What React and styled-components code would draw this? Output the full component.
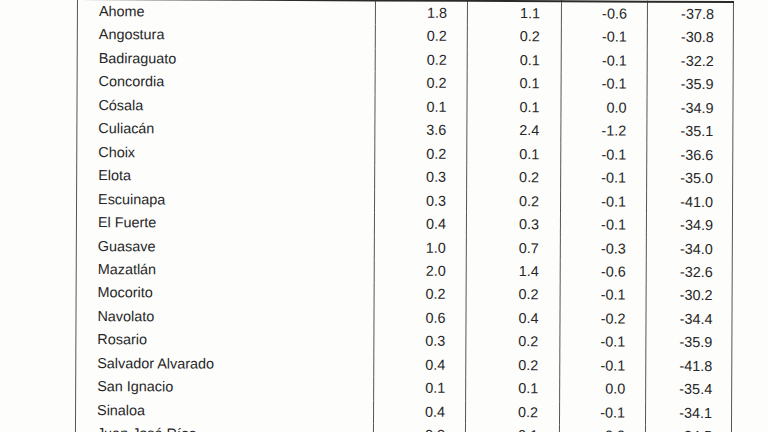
import React from 'react';
import styled, { createGlobalStyle } from 'styled-components';

const GlobalStyle = createGlobalStyle`
  html, body {
    margin: 0;
    padding: 0;
    background: #fdfdfc;
    overflow: hidden;
  }
`;

const Page = styled.div`
  width: 768px;
  height: 432px;
  overflow: hidden;
  background: #fdfdfc;
`;

const Table = styled.table`
  margin-left: 77px;
  margin-top: -2px;
  border-collapse: collapse;
  table-layout: fixed;
  width: 656px;
  font-family: "Liberation Sans", Arial, sans-serif;
  font-size: 14.4px;
  color: #262626;
  transform: rotate(0.27deg);
  transform-origin: 0 0;
  border-top: 2px solid #2a2a2a;
`;

const Row = styled.tr`
  height: 23.45px;
`;

const Cell = styled.td`
  padding: 0;
  border-left: 1px solid #555;
  border-right: 1px solid #555;
  text-align: ${({ $name }) => ($name ? 'left' : 'right')};
  padding-left: ${({ $name }) => ($name ? '21px' : '0')};
  padding-right: ${({ $pad }) => $pad || 0}px;
  white-space: nowrap;
  vertical-align: middle;
  line-height: 23.45px;
`;

const widths = [298, 92, 94, 86, 86];
const pads = [0, 20, 21, 20, 19];

const rows = [
  ['Ahome', '1.8', '1.1', '-0.6', '-37.8'],
  ['Angostura', '0.2', '0.2', '-0.1', '-30.8'],
  ['Badiraguato', '0.2', '0.1', '-0.1', '-32.2'],
  ['Concordia', '0.2', '0.1', '-0.1', '-35.9'],
  ['Cósala', '0.1', '0.1', '0.0', '-34.9'],
  ['Culiacán', '3.6', '2.4', '-1.2', '-35.1'],
  ['Choix', '0.2', '0.1', '-0.1', '-36.6'],
  ['Elota', '0.3', '0.2', '-0.1', '-35.0'],
  ['Escuinapa', '0.3', '0.2', '-0.1', '-41.0'],
  ['El Fuerte', '0.4', '0.3', '-0.1', '-34.9'],
  ['Guasave', '1.0', '0.7', '-0.3', '-34.0'],
  ['Mazatlán', '2.0', '1.4', '-0.6', '-32.6'],
  ['Mocorito', '0.2', '0.2', '-0.1', '-30.2'],
  ['Navolato', '0.6', '0.4', '-0.2', '-34.4'],
  ['Rosario', '0.3', '0.2', '-0.1', '-35.9'],
  ['Salvador Alvarado', '0.4', '0.2', '-0.1', '-41.8'],
  ['San Ignacio', '0.1', '0.1', '0.0', '-35.4'],
  ['Sinaloa', '0.4', '0.2', '-0.1', '-34.1'],
  ['Juan José Ríos', '0.2', '0.1', '-0.0', '-34.5'],
];

export default function App() {
  return (
    <Page>
      <GlobalStyle />
      <Table>
        <colgroup>
          {widths.map((w, i) => (
            <col key={i} style={{ width: w }} />
          ))}
        </colgroup>
        <tbody>
          {rows.map((r) => (
            <Row key={r[0]}>
              {r.map((v, i) => (
                <Cell key={i} $name={i === 0} $pad={pads[i]}>
                  {v}
                </Cell>
              ))}
            </Row>
          ))}
        </tbody>
      </Table>
    </Page>
  );
}
